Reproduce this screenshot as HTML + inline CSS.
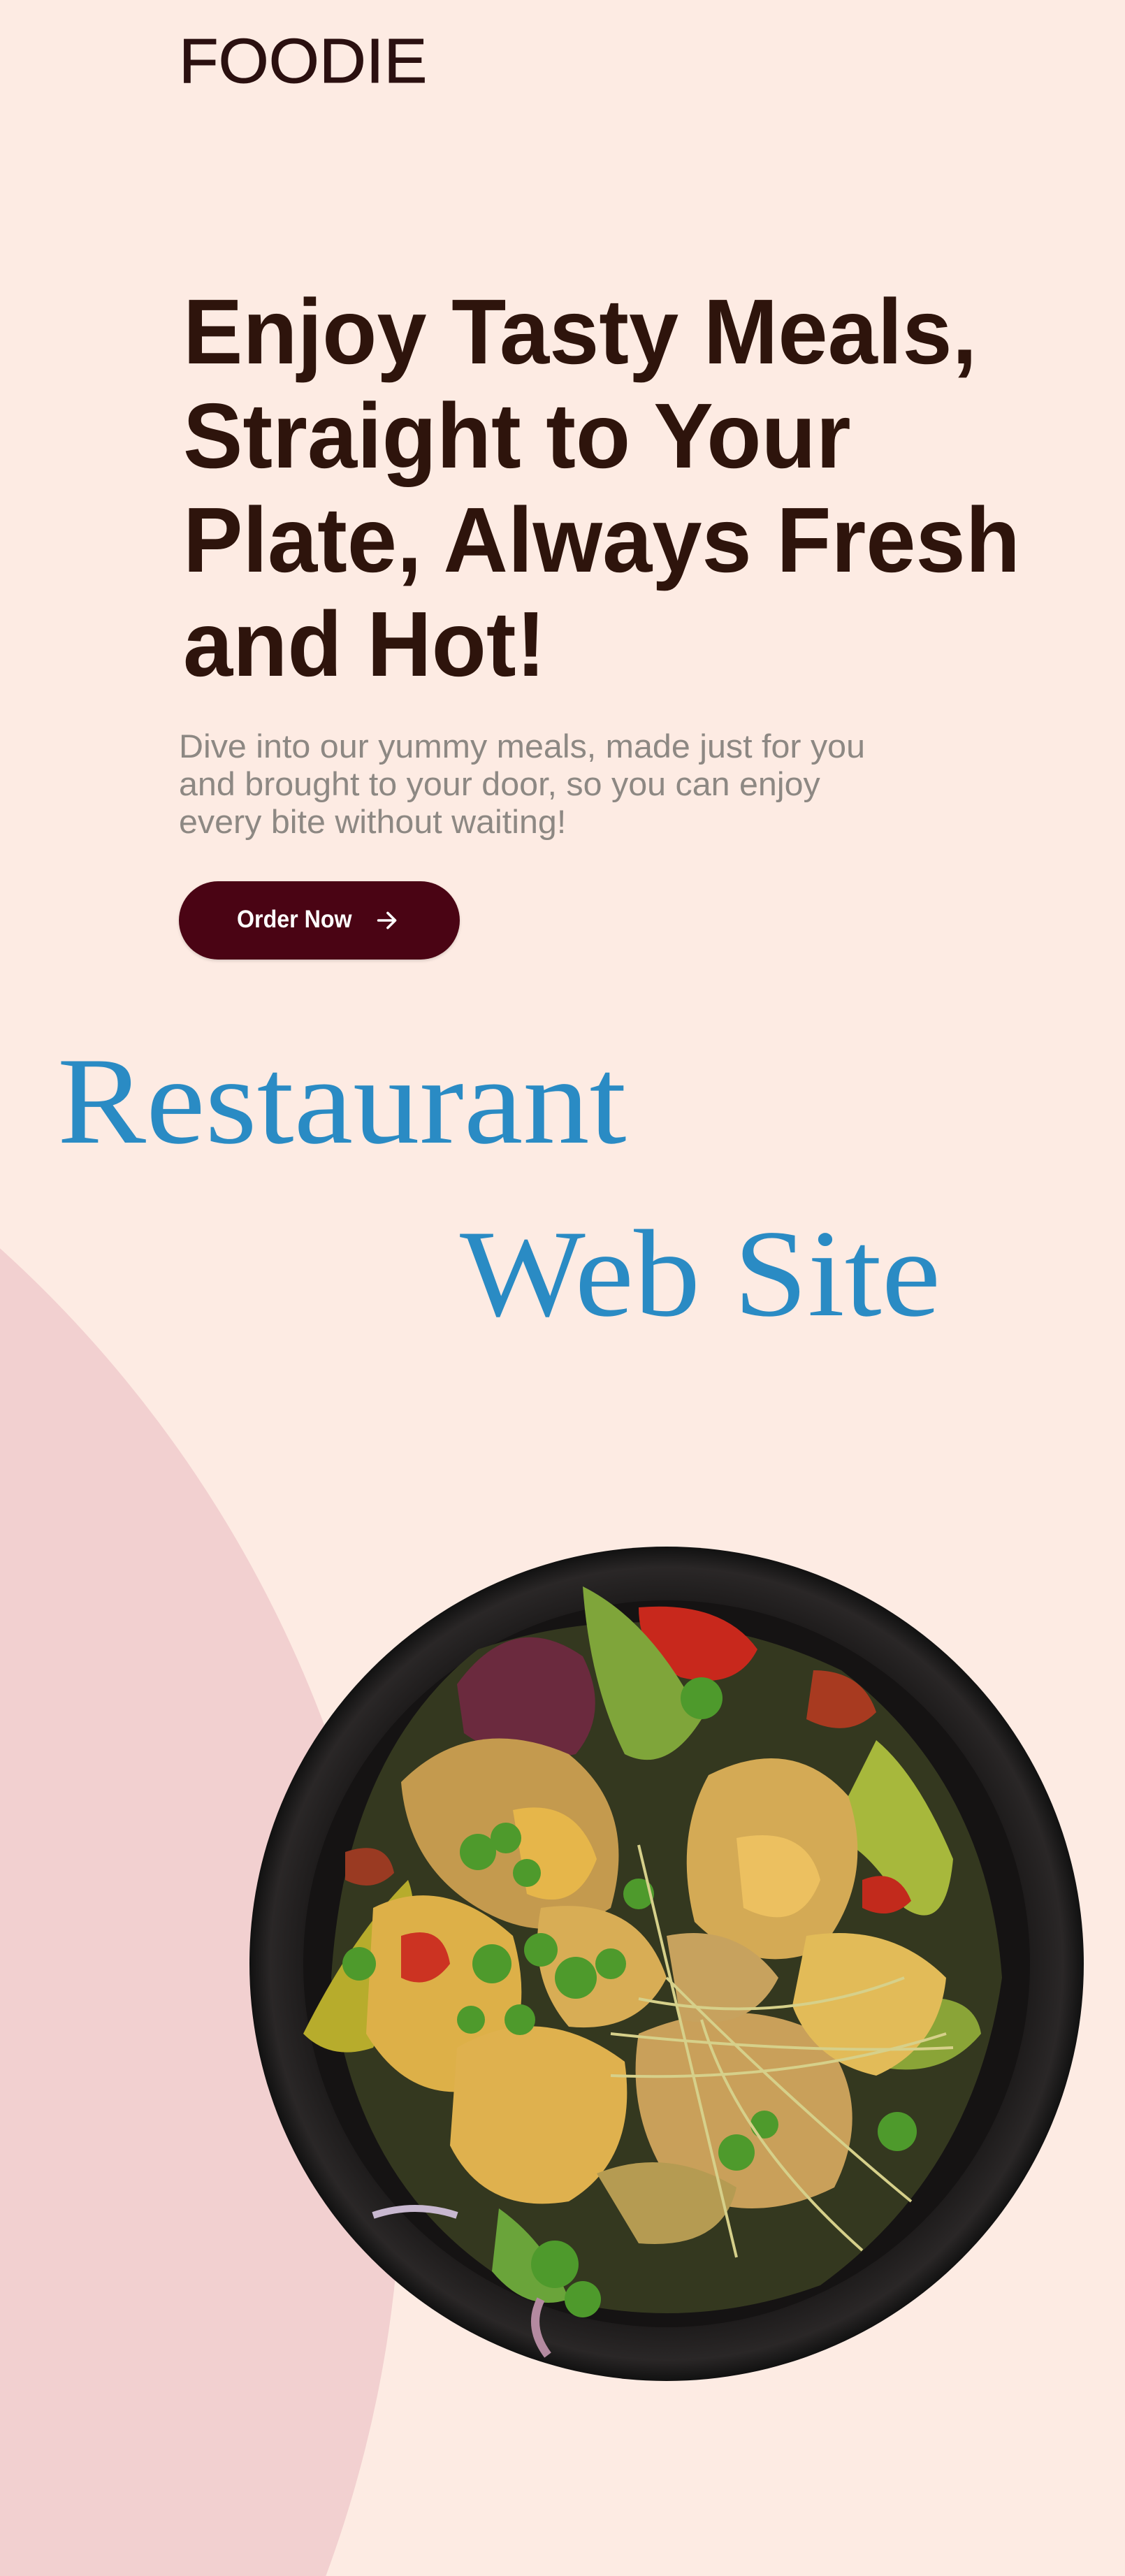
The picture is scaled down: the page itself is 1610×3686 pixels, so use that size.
<!DOCTYPE html>
<html><head><meta charset="utf-8">
<style>
html,body{margin:0;padding:0;overflow:hidden;width:1610px;height:3686px}
body{background:#fdebe3;font-family:"Liberation Sans",Arial,sans-serif}
#wrap{position:relative;width:1610px;height:3686px;overflow:hidden;background:#fdebe3}
.abs{position:absolute;white-space:nowrap}
#blob{position:absolute;left:0;top:0}
#logo{left:256px;top:38px;font-size:90px;line-height:100px;color:#2b1010;transform:scaleX(1.03);transform-origin:left top;-webkit-text-stroke:1px #2b1010}
#h1{left:262px;top:400px;font-size:132px;line-height:149px;font-weight:bold;color:#2e140c;transform:scaleX(0.97);transform-origin:left top}
#p{left:256px;top:1041px;font-size:47px;line-height:54px;color:#8d8883;transform:scaleX(1.03);transform-origin:left top}
#btn{left:256px;top:1261px;width:402px;height:112px;border-radius:56px;background:#4a0414;box-shadow:0 2px 4px rgba(0,0,0,.15)}
#btn span{position:absolute;left:83px;top:35px;font-size:35px;line-height:40px;color:#fff;font-weight:bold;transform:scaleX(0.92);transform-origin:left top}
#btn svg{position:absolute;left:282px;top:40px}
.serif{font-family:"Liberation Serif","Times New Roman",serif;color:#2a8bc4;font-size:178px;line-height:200px;transform:scaleX(1.07);transform-origin:left top}
#r1{left:82px;top:1475px}
#r2{left:658px;top:1722px}
#bowl{position:absolute;left:354px;top:2210px}
</style></head><body><div id="wrap">
<svg id="blob" width="1610" height="3686" viewBox="0 0 1610 3686"><circle cx="-1168" cy="3080" r="1743" fill="#f2d0d0"/></svg>
<div class="abs" id="logo">FOODIE</div>
<div class="abs" id="h1">Enjoy Tasty Meals,<br>Straight to Your<br>Plate, Always Fresh<br>and Hot!</div>
<div class="abs" id="p">Dive into our yummy meals, made just for you<br>and brought to your door, so you can enjoy<br>every bite without waiting!</div>
<div class="abs" id="btn"><span>Order Now</span><svg width="32" height="32" viewBox="0 0 36 36"><path d="M4 18H31M19 6L31 18L19 30" stroke="#fff" stroke-width="4" fill="none" stroke-linecap="round" stroke-linejoin="round"/></svg></div>
<div class="abs serif" id="r1">Restaurant</div>
<div class="abs serif" id="r2">Web Site</div>
<svg id="bowl" width="1200" height="1200" viewBox="0 0 1200 1200">
<defs><radialGradient id="g" cx="50%" cy="50%" r="50%"><stop offset="0.85" stop-color="#1b1919"/><stop offset="0.95" stop-color="#2a2727"/><stop offset="1" stop-color="#111"/></radialGradient></defs>
<circle cx="600" cy="600" r="597" fill="url(#g)"/>
<circle cx="600" cy="600" r="520" fill="#151313"/>
<path d="M120 620 Q140 300 330 150 Q600 60 850 180 Q1060 340 1080 620 Q1040 900 820 1060 Q600 1140 380 1060 Q150 920 120 620Z" fill="#34381f"/>
<path d="M300 200 Q380 90 480 160 Q520 240 470 300 Q380 320 310 270Z" fill="#6b2a3e"/>
<path d="M560 90 Q680 80 730 150 Q700 210 620 190 Q560 160 560 90Z" fill="#c8281c"/>
<path d="M810 180 Q880 180 900 240 Q860 280 800 250Z" fill="#a83a20"/>
<path d="M480 60 Q580 110 650 250 Q600 330 540 300 Q490 200 480 60Z" fill="#7fa53a"/>
<path d="M900 280 Q960 330 1010 450 Q1000 560 940 520 Q880 420 830 420Z" fill="#a7b83c"/>
<path d="M80 700 Q150 560 230 480 Q260 560 180 720 Q120 740 80 700Z" fill="#b7ac2c"/>
<path d="M950 650 Q1040 640 1050 700 Q1000 760 920 750Z" fill="#8aa437"/>
<path d="M220 340 Q320 240 460 300 Q560 380 520 520 Q430 580 330 520 Q230 460 220 340Z" fill="#c49a4e"/>
<path d="M660 330 Q780 270 860 360 Q900 480 820 580 Q720 620 640 540 Q610 420 660 330Z" fill="#d4aa55"/>
<path d="M180 520 Q280 470 380 560 Q420 700 330 780 Q230 800 170 700Z" fill="#ddb048"/>
<path d="M300 720 Q420 650 540 740 Q560 880 460 940 Q340 960 290 860Z" fill="#dfb14e"/>
<path d="M560 700 Q700 640 820 700 Q900 800 840 920 Q720 980 610 920 Q540 820 560 700Z" fill="#c9a05a"/>
<path d="M800 560 Q920 540 1000 620 Q990 720 900 760 Q810 740 780 660Z" fill="#e2bb58"/>
<path d="M380 380 Q470 360 500 450 Q470 530 400 500Z" fill="#e6b64a"/>
<path d="M700 420 Q800 400 820 480 Q790 560 710 520Z" fill="#ecc060"/>
<path d="M420 520 Q560 500 600 620 Q560 700 460 690 Q400 620 420 520Z" fill="#d8ad55"/>
<path d="M600 560 Q700 540 760 620 Q720 700 620 680Z" fill="#c7a25e"/>
<path d="M500 900 Q600 860 700 920 Q680 1010 560 1000Z" fill="#b59b52"/>
<path d="M360 950 Q430 1000 460 1080 Q400 1100 350 1040Z" fill="#6aa43a"/>
<path d="M140 440 Q200 420 210 470 Q180 500 140 480Z" fill="#9a3a22"/>
<path d="M220 560 Q280 540 290 600 Q260 640 220 620Z" fill="#cc3322"/>
<path d="M880 480 Q930 460 950 510 Q920 540 880 520Z" fill="#c22a1c"/>
<g fill="#4e9a2c">
<circle cx="330" cy="440" r="26"/><circle cx="370" cy="420" r="22"/><circle cx="400" cy="470" r="20"/>
<circle cx="350" cy="600" r="28"/><circle cx="420" cy="580" r="24"/><circle cx="470" cy="620" r="30"/>
<circle cx="520" cy="600" r="22"/><circle cx="320" cy="680" r="20"/><circle cx="390" cy="680" r="22"/>
<circle cx="560" cy="500" r="22"/><circle cx="700" cy="870" r="26"/><circle cx="740" cy="830" r="20"/>
<circle cx="160" cy="600" r="24"/><circle cx="650" cy="220" r="30"/><circle cx="440" cy="1030" r="34"/>
<circle cx="480" cy="1080" r="26"/><circle cx="930" cy="840" r="28"/>
</g>
<g stroke="#d6d08a" stroke-width="4" fill="none">
<path d="M560 430 Q600 600 700 1020"/><path d="M520 700 Q800 730 1010 720"/><path d="M560 650 Q760 690 940 620"/>
<path d="M600 620 Q780 800 950 940"/><path d="M520 760 Q780 770 1000 700"/><path d="M650 680 Q700 850 880 1010"/>
</g>
<path d="M180 960 Q240 940 300 960" stroke="#c8b8d0" stroke-width="10" fill="none"/>
<path d="M420 1080 Q400 1120 430 1160" stroke="#b48aa0" stroke-width="12" fill="none"/>
</svg>
</div></body></html>
